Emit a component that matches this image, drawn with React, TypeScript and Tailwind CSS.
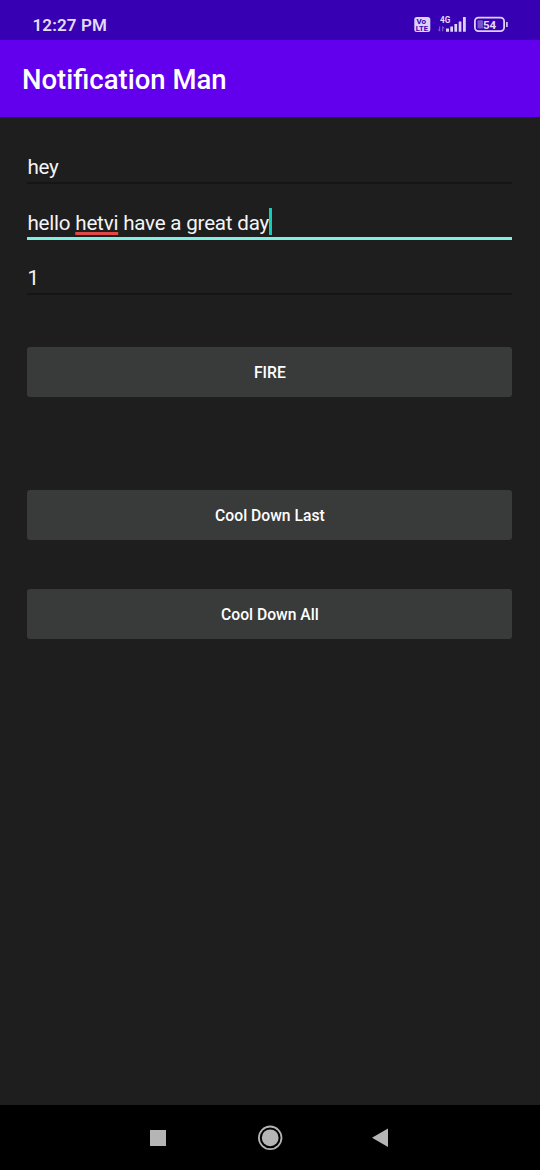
import type { ReactNode } from "react";

function StatusBar() {
  return (
    <header className="flex h-10 items-start justify-between bg-[#3700b3] pl-[32.5px] pr-8 text-[#e4dcf7]">
      <span className="mt-[15px] text-[17px] leading-5 font-semibold tracking-[0.12px]">12:27 PM</span>
      <div className="mt-[15px] flex">
        <svg width="94" height="19" viewBox="0 0 94 19" fontFamily="Roboto, sans-serif" fontWeight="700">
          <rect x="0.3" y="2" width="16" height="15" rx="2.5" fill="#dcd2f5" />
          <text x="2.4" y="9.1" fontSize="8" fill="#3700b3">Vo</text>
          <text x="1.8" y="16" fontSize="7.5" fill="#3700b3">LTE</text>
          <text x="26" y="7.6" fontSize="8.2" fill="#e4dcf7">4G</text>
          <path d="M25.7 11.5v4.5M24.3 14.5l1.4 1.8M28.7 16.3v-4.5M28.7 11.7l1.4 1.8" stroke="#8a68d2" strokeWidth="1" fill="none" />
          <path d="M32 16.8v-3.3h3v3.3zM36.3 16.8v-5.3h2.7v5.3zM40.4 16.8V9h2.7v7.8zM44.7 16.8V6.5h2.7v10.3zM49 16.8V2h2.8v14.8z" fill="#dcd2f5" />
          <rect x="60.9" y="2.7" width="29.2" height="13.4" rx="3.6" fill="none" stroke="#dcd2f5" strokeWidth="1.8" />
          <rect x="63.5" y="5.2" width="5.5" height="8.4" rx="1" fill="#7753ca" />
          <path d="M92.9 7v5" stroke="#dcd2f5" strokeWidth="1.6" />
          <text x="69" y="13.6" fontSize="11.5" fill="#e4dcf7">54</text>
        </svg>
      </div>
    </header>
  );
}

function Field({ children, focused = false }: { children: ReactNode; focused?: boolean }) {
  return (
    <div
      className={
        focused
          ? "flex h-[56px] items-end border-b-[3px] border-[#80efe1] text-[20.6px] leading-6 tracking-[-0.21px] text-[#f4f4f4]"
          : "flex h-[54px] items-end border-b-2 border-[#151515] text-[20.6px] leading-6 tracking-[-0.21px] text-[#f4f4f4]"
      }
    >
      {children}
    </div>
  );
}

function ActionButton({ children }: { children: ReactNode }) {
  return (
    <button className="flex h-[50px] w-full items-center justify-center rounded-[3px] bg-[#393b3a] pt-[2px] text-[15.7px] leading-5 font-medium text-white">
      {children}
    </button>
  );
}

function NavigationBar() {
  return (
    <nav className="flex h-[65px] items-center bg-black pl-[150px]">
      <svg width="16" height="16" viewBox="0 0 16 16">
        <path d="M0 0h16v16H0z" fill="#b5b5b5" />
      </svg>
      <svg className="ml-[91px]" width="26" height="26" viewBox="0 0 26 26">
        <circle cx="13.2" cy="12.8" r="11.3" fill="none" stroke="#b5b5b5" strokeWidth="1.8" />
        <circle cx="13.2" cy="12.8" r="8.4" fill="#b5b5b5" />
      </svg>
      <svg className="ml-[89px]" width="16" height="20" viewBox="0 0 16 20">
        <path d="M0 9.8 16 .5v18.6z" fill="#b5b5b5" />
      </svg>
    </nav>
  );
}

export default function App() {
  return (
    <div className="flex h-[1170px] w-[540px] flex-col overflow-hidden bg-[#1e1e1e] font-[Roboto,sans-serif]">
      <StatusBar />
      <div className="flex h-[77px] items-center bg-[#6200ee] pt-[3px] pl-[22px] text-[27.5px] leading-8 font-medium text-white">
        Notification Man
      </div>
      <main className="flex flex-1 flex-col pt-[13px] pr-[27.6px] pl-[27.4px]">
        <Field>
          <span className="mb-[3px]">hey</span>
        </Field>
        <Field focused>
          <span className="mb-[2px] whitespace-pre">
            hello{" "}
            <span className="underline decoration-[#e04848] decoration-[3px] underline-offset-[2px] [text-decoration-skip-ink:none]">hetvi</span>
            {" "}have a great day
          </span>
          <span className="mb-[2px] h-[27px] w-[3px] bg-[#14cdb8]" />
        </Field>
        <div className="pt-px">
          <Field>
            <span className="mb-[3px]">1</span>
          </Field>
        </div>
        <div className="mt-[51.5px]">
          <ActionButton>FIRE</ActionButton>
        </div>
        <div className="mt-[93px]">
          <ActionButton>Cool Down Last</ActionButton>
        </div>
        <div className="mt-[49px]">
          <ActionButton>Cool Down All</ActionButton>
        </div>
      </main>
      <NavigationBar />
    </div>
  );
}
